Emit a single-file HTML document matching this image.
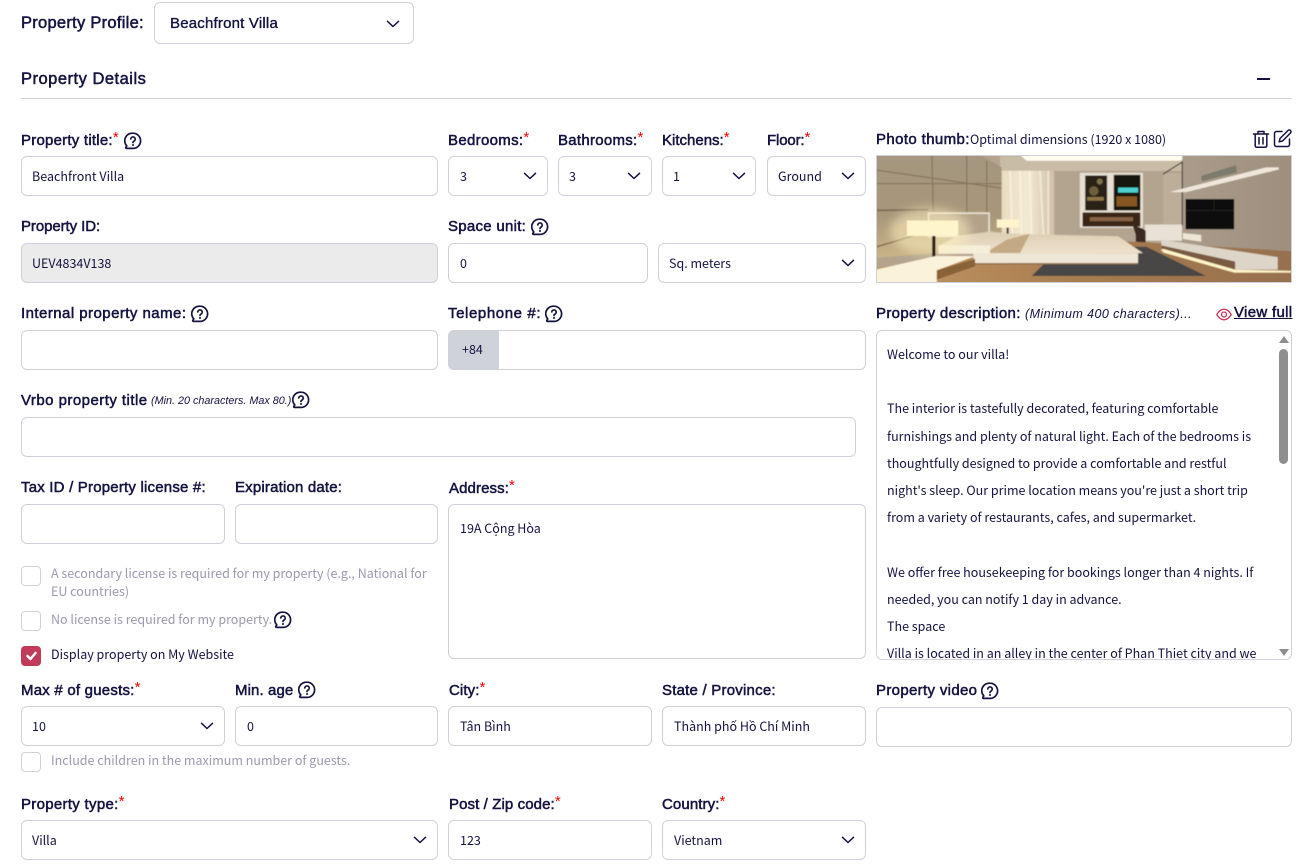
<!DOCTYPE html>
<html><head><meta charset="utf-8">
<style>
*{box-sizing:border-box}
html,body{margin:0;padding:0;background:#fff;width:1307px;height:868px;overflow:hidden}
body{position:relative;font-family:"Noto Sans CJK JP","Liberation Sans",sans-serif;color:#14123f}
.l{position:absolute;font-family:"Liberation Sans",sans-serif;font-size:15px;font-weight:400;-webkit-text-stroke:.5px #14123f;color:#14123f;white-space:nowrap;line-height:20px}
.l b{color:#f00;font-weight:400;-webkit-text-stroke:0;position:relative;top:-3px;font-size:15px;letter-spacing:0}
.b{position:absolute;height:40px;border:1px solid #d0d0dc;border-radius:6px;background:#fff;font-size:12.5px;line-height:37px;padding-left:10px;white-space:nowrap}
.c{position:absolute;width:20px;height:20px;border:1px solid #d0d0dc;border-radius:4px;background:#fff}
.t{position:absolute;font-size:12.5px;line-height:18px;color:#9a99ad;white-space:nowrap}
.h{position:absolute;width:18px;height:18px}
.a{position:absolute;width:14px;height:8px}
</style></head><body>
<svg width="0" height="0" style="position:absolute"><defs>
<symbol id="q" viewBox="0 0 18 18"><path d="M9 1.2a7.6 7.600 0 0 1 0 15.200H2.600c-.9 0-1.100-.8-.6-1.400l.8-1A7.600 7.600 0 0 1 9 1.200z" fill="none" stroke="#14123f" stroke-width="1.700" stroke-linejoin="round"/><path d="M6.800 7a2.200 2.200 0 1 1 3.300 2c-.7.400-1.100.8-1.100 1.600" fill="none" stroke="#14123f" stroke-width="1.600" stroke-linecap="round"/><circle cx="9" cy="13" r="1" fill="#14123f"/></symbol>
<symbol id="v" viewBox="0 0 14 8"><path d="M1.500 1.300 7 6.500l5.500-5.200" fill="none" stroke="#14123f" stroke-width="1.500" stroke-linecap="round" stroke-linejoin="round"/></symbol>
</defs></svg>

<div class="l" style="left:21px;top:13px;font-size:16.500px;letter-spacing:.27px">Property Profile:</div>
<div class="b" style="left:154px;top:2px;width:260px;height:42px;line-height:41px;padding-left:15px;font-family:'Liberation Sans',sans-serif;font-size:15px;letter-spacing:.2px;-webkit-text-stroke:.35px #14123f">Beachfront Villa</div>
<svg class="a" style="left:386px;top:20px"><use href="#v"/></svg>

<div class="l" style="left:21px;top:69px;font-size:16.500px;letter-spacing:.5px">Property Details</div>
<div style="position:absolute;left:1257px;top:78px;width:13px;height:1.500px;background:#14123f"></div>
<div style="position:absolute;left:21px;top:98px;width:1271px;height:1px;background:#d0d0dc"></div>

<div class="l" style="left:21px;top:131px;letter-spacing:.23px">Property title:<b>*</b></div>
<svg class="h" style="left:124px;top:132px"><use href="#q"/></svg>
<div class="b" style="left:21px;top:156px;width:417px">Beachfront Villa</div>

<div class="l" style="left:448px;top:131px;letter-spacing:.32px">Bedrooms:<b>*</b></div>
<div class="b" style="left:448px;top:156px;width:100px;padding-left:11px">3</div><svg class="a" style="left:523px;top:172px"><use href="#v"/></svg>
<div class="l" style="left:558px;top:131px;letter-spacing:.28px">Bathrooms:<b>*</b></div>
<div class="b" style="left:558px;top:156px;width:94px;padding-left:10px">3</div><svg class="a" style="left:627px;top:172px"><use href="#v"/></svg>
<div class="l" style="left:662px;top:131px;letter-spacing:0">Kitchens:<b>*</b></div>
<div class="b" style="left:662px;top:156px;width:94px">1</div><svg class="a" style="left:732px;top:172px"><use href="#v"/></svg>
<div class="l" style="left:767px;top:131px;letter-spacing:-.15px">Floor:<b>*</b></div>
<div class="b" style="left:767px;top:156px;width:99px">Ground</div><svg class="a" style="left:841px;top:172px"><use href="#v"/></svg>

<div class="l" style="left:876px;top:130px;letter-spacing:.38px">Photo thumb:</div>
<div style="position:absolute;left:970px;top:130px;font-size:12.500px;line-height:18px;white-space:nowrap">Optimal dimensions (1920 x 1080)</div>
<svg style="position:absolute;left:1252px;top:130px" width="18" height="18" viewBox="0 0 18 18" fill="none" stroke="#14123f" stroke-width="1.500" stroke-linecap="round" stroke-linejoin="round"><path d="M1.500 4h15M6 4V1.500h6V4M3.200 4v11.500c0 1 .6 1.700 1.600 1.700h8.400c1 0 1.600-.7 1.600-1.700V4M7 7.500v6.500M11 7.500v6.500"/></svg>
<svg style="position:absolute;left:1273px;top:129px" width="19" height="19" viewBox="0 0 19 19" fill="none" stroke="#14123f" stroke-width="1.500" stroke-linecap="round" stroke-linejoin="round"><path d="M9 2.500H3.500a2 2 0 0 0-2 2v11a2 2 0 0 0 2 2h11a2 2 0 0 0 2-2V10"/><path d="M15 1.500a1.700 1.700 0 0 1 2.500 2.500L9.500 12l-3.300.8.800-3.300z"/></svg>

<!-- photo -->
<svg style="position:absolute;left:876px;top:155px;border:1px solid #d0d0dc" width="416" height="128" viewBox="20 96 1245 375" preserveAspectRatio="none">
<defs>
<filter id="bl" x="0" y="0" width="100%" height="100%"><feGaussianBlur stdDeviation="1.600"/></filter>
<filter id="bl2" x="-20%" y="-20%" width="140%" height="140%"><feGaussianBlur stdDeviation="14"/></filter>
<linearGradient id="w" x1="0" y1="0" x2="0" y2="1"><stop offset="0" stop-color="#a49680"/><stop offset=".6" stop-color="#a8967a"/><stop offset="1" stop-color="#c9b487"/></linearGradient>
<linearGradient id="r" x1="0" y1="0" x2="1" y2="0"><stop offset="0" stop-color="#aa9c8a"/><stop offset="1" stop-color="#9e8f7d"/></linearGradient>
<linearGradient id="f" x1="0" y1="0" x2="1" y2="0"><stop offset="0" stop-color="#c29763"/><stop offset=".5" stop-color="#a87c50"/><stop offset="1" stop-color="#967050"/></linearGradient>
<linearGradient id="cu" x1="0" y1="0" x2="1" y2="0"><stop offset="0" stop-color="#e8dcc0"/><stop offset=".5" stop-color="#f3e9d2"/><stop offset="1" stop-color="#cfc0a6"/></linearGradient>
<linearGradient id="bd" x1="0" y1="0" x2="0" y2="1"><stop offset="0" stop-color="#dccdb4"/><stop offset="1" stop-color="#eee2cc"/></linearGradient>
</defs>
<g filter="url(#bl)">
<rect x="0" y="80" width="1290" height="410" fill="#b4a48e"/>
<rect x="390" y="96" width="560" height="48" fill="#c9bca6"/>
<path d="M447 90h495v14l-10 6H470z" fill="#fffdf2"/>
<rect x="550" y="140" width="390" height="225" fill="#b3a490"/>
<rect x="938" y="80" width="340" height="310" fill="url(#r)"/>
<path d="M0 80h310l85 50v240L0 400z" fill="url(#w)"/>
<path d="M0 135l395 57M185 90l5 200M290 90v190M350 110v175M0 178h395" stroke="#6b5a46" stroke-width="3.500" fill="none" opacity=".55"/>
<path d="M0 258l175-2" stroke="#6b5a46" stroke-width="5" opacity=".7"/>
<path d="M0 372l175-52" stroke="#5e4a2f" stroke-width="4" opacity=".75"/>
<rect x="395" y="140" width="158" height="225" fill="url(#cu)"/>
<path d="M420 140l8 215M450 140l6 215M480 140l5 215M510 140l12 215M535 140v215" stroke="#fff8e6" stroke-width="6" opacity=".6"/>
<!-- window -->
<rect x="630" y="146" width="190" height="164" fill="#e7dfd2"/>
<rect x="646" y="154" width="66" height="104" fill="#2a2018"/>
<rect x="732" y="152" width="80" height="106" fill="#191410"/>
<rect x="638" y="264" width="174" height="42" fill="#3a2618"/>
<circle cx="672" cy="200" r="14" fill="#8a7d4a" opacity=".7"/><circle cx="690" cy="172" r="9" fill="#a39368" opacity=".7"/><rect x="652" y="218" width="50" height="11" fill="#b89a5a" opacity=".7"/><rect x="745" y="190" width="60" height="15" fill="#4fd0d2"/><rect x="740" y="216" width="62" height="30" fill="#a06a28" opacity=".8"/><rect x="660" y="278" width="130" height="12" fill="#bb8e68" opacity=".6"/>
<path d="M882 148h56v155h-56z" fill="#bdae99"/>
<path d="M880 150l58-36v190" fill="none" stroke="#2e261f" stroke-width="3"/>
<!-- shelf, tv -->
<path d="M900 203l290-73h38v6l-280 68z" fill="#efe7da"/>
<path d="M995 155l105-32 2 22-105 26z" fill="#7d7a6e"/>
<rect x="948" y="224" width="146" height="90" fill="#0b0909"/>
<rect x="1033" y="226" width="1.500" height="30" fill="#3a342e"/>
<path d="M948 258h146" stroke="#39322c" stroke-width="2"/>
<!-- desk/chair -->
<rect x="825" y="300" width="112" height="48" fill="#e9e1d5"/>
<path d="M788 300l30 12 10 6v42h-30v-30z" fill="#3a2a20"/>
<!-- floor -->
<path d="M0 430L780 350l500 30v100H0z" fill="url(#f)"/>
<!-- rug -->
<path d="M780 366h50l180 87H485l35-34h280z" fill="#4a4644"/>
<!-- tv unit -->
<path d="M875 345l350 52v37H1095l-220-55z" fill="#ddd5c8"/>
<path d="M875 362l222 48v24L875 372z" fill="#7a5a40"/>
<path d="M880 372l215 62 170 4v5l-170 0-215-60z" fill="#fff5c8"/>
<path d="M940 325l55 6v20l-55-8z" fill="#efe6d6"/>
<!-- headboard/bed -->
<rect x="175" y="266" width="182" height="70" fill="#b3a28a" stroke="#e9e0d1" stroke-width="5"/>
<path d="M205 385v-22l60-30 95-12 85 7 300 7 75 50z" fill="url(#bd)"/>
<path d="M345 385l65-40 70-18-30 58z" fill="#c4aa84"/>
<path d="M205 362h155v25H205z" fill="#f5eed9"/>
<path d="M310 385h495v30H310z" fill="#efe6d6"/>
<path d="M310 415h495v4H310z" fill="#8f6f4c"/>
<!-- lamps -->
<ellipse cx="180" cy="320" rx="120" ry="70" fill="#fff0c0" opacity=".55" filter="url(#bl2)"/>
<rect x="110" y="288" width="154" height="46" fill="#fff5cc"/>
<rect x="186" y="334" width="10" height="72" fill="#2e2415"/>
<ellipse cx="190" cy="407" rx="48" ry="7" fill="#a58e66"/>
<rect x="380" y="285" width="68" height="24" fill="#fff5cc"/>
<rect x="410" y="309" width="6" height="18" fill="#3a2e20"/>
<!-- nightstand -->
<path d="M0 438l195-44h120l-115 42v45H0z" fill="#fbf3d9"/>
<path d="M200 436l115-34v22l-115 40z" fill="#8a6238"/>
</g>
</svg>

<div class="l" style="left:21px;top:217px;letter-spacing:-.08px">Property ID:</div>
<div class="b" style="left:21px;top:243px;width:417px;background:#ebebeb">UEV4834V138</div>
<div class="l" style="left:448px;top:217px;letter-spacing:.28px">Space unit:</div>
<svg class="h" style="left:531px;top:218px"><use href="#q"/></svg>
<div class="b" style="left:448px;top:243px;width:200px;padding-left:11px">0</div>
<div class="b" style="left:658px;top:243px;width:208px">Sq. meters</div><svg class="a" style="left:841px;top:259px"><use href="#v"/></svg>

<div class="l" style="left:21px;top:304px;letter-spacing:.45px">Internal property name:</div>
<svg class="h" style="left:191px;top:305px"><use href="#q"/></svg>
<div class="b" style="left:21px;top:330px;width:417px"></div>
<div class="l" style="left:448px;top:304px;letter-spacing:.6px">Telephone #:</div>
<svg class="h" style="left:545px;top:305px"><use href="#q"/></svg>
<div class="b" style="left:448px;top:330px;width:418px"></div>
<div style="position:absolute;left:448px;top:330px;width:51px;height:40px;background:#d0d2da;border-radius:6px 0 0 6px;font-size:12.500px;line-height:38px;padding-left:14px">+84</div>

<div class="l" style="left:876px;top:304px;letter-spacing:.34px">Property description:</div>
<div style="position:absolute;left:1025px;top:304px;font-family:'Liberation Sans',sans-serif;font-style:italic;font-size:12.500px;line-height:20px;white-space:nowrap;letter-spacing:.42px">(Minimum 400 characters)...</div>
<svg style="position:absolute;left:1216px;top:308px" width="16" height="13" viewBox="0 0 16 13" fill="none" stroke="#c23a5b" stroke-width="1.300"><path d="M.8 6.500C3 2.800 5.300 1.200 8 1.200s5 1.600 7.200 5.300C13 10.200 10.700 11.800 8 11.800S3 10.200.8 6.500z"/><circle cx="8" cy="6.500" r="2.500"/></svg>
<div class="l" style="left:1234px;top:303px;text-decoration:underline;letter-spacing:.32px">View full</div>
<div class="b" style="left:876px;top:330px;width:416px;height:330px;overflow:hidden;padding:9px 0 0 10px;line-height:27.200px;white-space:nowrap">Welcome to our villa!<br><br>The interior is tastefully decorated, featuring comfortable<br>furnishings and plenty of natural light. Each of the bedrooms is<br>thoughtfully designed to provide a comfortable and restful<br>night's sleep. Our prime location means you're just a short trip<br>from a variety of restaurants, cafes, and supermarket.<br><br>We offer free housekeeping for bookings longer than 4 nights. If<br>needed, you can notify 1 day in advance.<br>The space<br>Villa is located in an alley in the center of Phan Thiet city and we</div>
<div style="position:absolute;left:1279px;top:349px;width:9px;height:115px;background:#8f8f8f;border-radius:5px"></div>
<div style="position:absolute;left:1279px;top:336px;border-left:5px solid transparent;border-right:5px solid transparent;border-bottom:7px solid #8f8f8f"></div>
<div style="position:absolute;left:1279px;top:649px;border-left:5px solid transparent;border-right:5px solid transparent;border-top:7px solid #8f8f8f"></div>

<div class="l" style="left:21px;top:391px;letter-spacing:.46px">Vrbo property title</div>
<div style="position:absolute;left:151px;top:392px;font-family:'Liberation Sans',sans-serif;font-style:italic;font-size:10.800px;line-height:18px;white-space:nowrap">(Min. 20 characters. Max 80.)</div>
<svg class="h" style="left:292px;top:391px"><use href="#q"/></svg>
<div class="b" style="left:21px;top:417px;width:835px"></div>

<div class="l" style="left:21px;top:478px;letter-spacing:.2px">Tax ID / Property license #:</div>
<div class="b" style="left:21px;top:504px;width:204px"></div>
<div class="l" style="left:235px;top:478px;letter-spacing:.18px">Expiration date:</div>
<div class="b" style="left:235px;top:504px;width:203px"></div>
<div class="l" style="left:449px;top:479px;letter-spacing:.1px">Address:<b>*</b></div>
<div class="b" style="left:448px;top:504px;width:418px;height:155px;line-height:45px;padding-left:11px">19A Cộng Hòa</div>

<div class="c" style="left:21px;top:566px"></div>
<div class="t" style="left:51px;top:564px">A secondary license is required for my property (e.g., National for<br>EU countries)</div>
<div class="c" style="left:21px;top:611px"></div>
<div class="t" style="left:51px;top:610px">No license is required for my property.</div>
<svg class="h" style="left:274px;top:611px"><use href="#q"/></svg>
<div class="c" style="left:21px;top:646px;background:#c23a5b;border-color:#c23a5b"></div>
<svg style="position:absolute;left:26px;top:651px" width="11" height="10" viewBox="0 0 11 10"><path d="M1.500 5l3 3 5-6" fill="none" stroke="#fff" stroke-width="2.500" stroke-linecap="round" stroke-linejoin="round"/></svg>
<div class="t" style="left:51px;top:645px;color:#14123f">Display property on My Website</div>

<div class="l" style="left:21px;top:681px;letter-spacing:.22px">Max # of guests:<b>*</b></div>
<div class="b" style="left:21px;top:706px;width:204px">10</div><svg class="a" style="left:200px;top:722px"><use href="#v"/></svg>
<div class="l" style="left:235px;top:681px;letter-spacing:.1px">Min. age</div>
<svg class="h" style="left:298px;top:681px"><use href="#q"/></svg>
<div class="b" style="left:235px;top:706px;width:203px;padding-left:11px">0</div>
<div class="l" style="left:449px;top:681px;letter-spacing:.1px">City:<b>*</b></div>
<div class="b" style="left:448px;top:706px;width:204px;padding-left:11px">Tân Bình</div>
<div class="l" style="left:662px;top:681px;letter-spacing:.22px">State / Province:</div>
<div class="b" style="left:662px;top:706px;width:204px;padding-left:11px">Thành phố Hồ Chí Minh</div>
<div class="l" style="left:876px;top:681px;letter-spacing:.33px">Property video</div>
<svg class="h" style="left:981px;top:682px"><use href="#q"/></svg>
<div class="b" style="left:876px;top:707px;width:416px"></div>

<div class="c" style="left:21px;top:752px"></div>
<div class="t" style="left:51px;top:751px">Include children in the maximum number of guests.</div>

<div class="l" style="left:21px;top:795px;letter-spacing:.3px">Property type:<b>*</b></div>
<div class="b" style="left:21px;top:820px;width:417px">Villa</div><svg class="a" style="left:413px;top:836px"><use href="#v"/></svg>
<div class="l" style="left:449px;top:795px;letter-spacing:.1px">Post / Zip code:<b>*</b></div>
<div class="b" style="left:448px;top:820px;width:204px;padding-left:11px">123</div>
<div class="l" style="left:662px;top:795px;letter-spacing:.1px">Country:<b>*</b></div>
<div class="b" style="left:662px;top:820px;width:204px;padding-left:11px">Vietnam</div><svg class="a" style="left:841px;top:836px"><use href="#v"/></svg>
</body></html>
